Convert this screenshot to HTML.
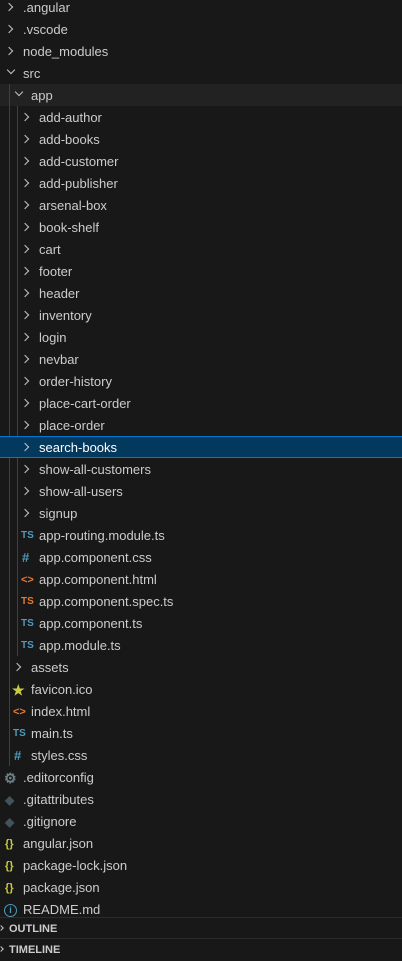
<!DOCTYPE html>
<html><head><meta charset="utf-8"><style>
*{margin:0;padding:0;box-sizing:border-box}
body{width:402px;height:950px;background:#181818;overflow:hidden;position:relative;font-family:"Segoe UI","Liberation Sans",sans-serif;font-size:13px;color:#cccccc}
.r{position:absolute;left:0;width:402px;height:22px;line-height:22px;white-space:nowrap}
.t{position:absolute;top:1px}
.ch{position:absolute;top:8px;width:6px;height:6px;border-right:1.1px solid #c5c5c5;border-bottom:1.1px solid #c5c5c5}
.cr{transform:rotate(-45deg)}
.cd{transform:rotate(45deg);top:5px}
.ic{position:absolute;top:1px;font-weight:bold;font-size:10px}
.g{position:absolute;width:1px;background:#404040}
.hd{position:absolute;left:0;width:402px;height:22px;border-top:1px solid #2b2b2b;font-weight:bold;font-size:11px;line-height:21px}
</style></head><body>
<div class="r" style="top:84px;background:#222"></div>
<div class="g" style="left:9px;top:84px;height:682px"></div>
<div class="g" style="left:17px;top:106px;height:550px"></div>
<div class="r" style="top:436px;background:#04395e;border-top:1px solid #0078d4;border-bottom:1px solid #0078d4"></div>
<div id="rows"></div>
<script>
var D=[
[0,'d','.angular'],[0,'d','.vscode'],[0,'d','node_modules'],[0,'o','src'],[1,'o','app'],
[2,'d','add-author'],[2,'d','add-books'],[2,'d','add-customer'],[2,'d','add-publisher'],[2,'d','arsenal-box'],[2,'d','book-shelf'],[2,'d','cart'],[2,'d','footer'],[2,'d','header'],[2,'d','inventory'],[2,'d','login'],[2,'d','nevbar'],[2,'d','order-history'],[2,'d','place-cart-order'],[2,'d','place-order'],[2,'d','search-books'],[2,'d','show-all-customers'],[2,'d','show-all-users'],[2,'d','signup'],
[2,'ts','app-routing.module.ts'],[2,'css','app.component.css'],[2,'html','app.component.html'],[2,'spec','app.component.spec.ts'],[2,'ts','app.component.ts'],[2,'ts','app.module.ts'],
[1,'d','assets'],[1,'star','favicon.ico'],[1,'html','index.html'],[1,'ts','main.ts'],[1,'css','styles.css'],
[0,'gear','.editorconfig'],[0,'git','.gitattributes'],[0,'git','.gitignore'],[0,'json','angular.json'],[0,'json','package-lock.json'],[0,'json','package.json'],[0,'info','README.md']];
var h='';
D.forEach(function(d,i){
 var top=-4+22*i,x=8*d[0],tx=23+x,ic='';
 if(d[1]=='d')ic='<span class="ch cr" style="left:'+(x+6)+'px"></span>';
 else if(d[1]=='o')ic='<span class="ch cd" style="left:'+(x+8)+'px"></span>';
 else if(d[1]=='ts')ic='<span class="ic" style="left:'+(x+5)+'px;color:#519aba">TS</span>';
 else if(d[1]=='spec')ic='<span class="ic" style="left:'+(x+5)+'px;color:#e37933">TS</span>';
 else if(d[1]=='css')ic='<span class="ic" style="left:'+(x+6)+'px;color:#519aba;font-size:13px">#</span>';
 else if(d[1]=='html')ic='<span class="ic" style="left:'+(x+5)+'px;color:#e37933;font-size:11px">&lt;&gt;</span>';
 else if(d[1]=='star')ic='<span class="ic" style="left:'+(x+4)+'px;color:#cbcb41;font-size:14px">★</span>';
 else if(d[1]=='gear')ic='<span class="ic" style="left:'+(x+4)+'px;color:#6d8086;font-size:14px">⚙</span>';
 else if(d[1]=='git')ic='<span class="ic" style="left:'+(x+5)+'px;color:#41535b;font-size:12px">◆</span>';
 else if(d[1]=='json')ic='<span class="ic" style="left:'+(x+5)+'px;color:#cbcb41;font-size:11px">{}</span>';
 else if(d[1]=='info')ic='<span class="ic" style="left:'+(x+4)+'px;top:6px;width:13px;height:13px;border:1.3px solid #519aba;border-radius:50%;color:#519aba;font-size:9px;line-height:11px;text-align:center">i</span>';
 h+='<div class="r" style="top:'+top+'px">'+ic+'<span class="t" style="left:'+tx+'px'+(i==20?';color:#fff':'')+'">'+d[2]+'</span></div>';
});
document.getElementById('rows').innerHTML=h;
</script>
<div class="hd" style="top:917px"><span class="ch cr" style="left:-1px;top:8px;width:4px;height:4px"></span><span style="position:absolute;left:9px;top:1px">OUTLINE</span></div>
<div class="hd" style="top:938px"><span class="ch cr" style="left:-1px;top:8px;width:4px;height:4px"></span><span style="position:absolute;left:9px;top:1px">TIMELINE</span></div>
</body></html>
